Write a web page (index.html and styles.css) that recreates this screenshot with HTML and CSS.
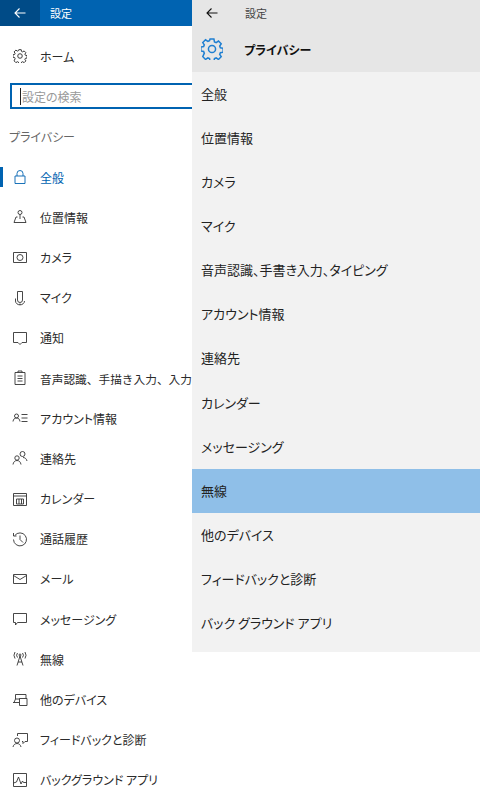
FILE: index.html
```html
<!DOCTYPE html>
<html lang="ja">
<head>
<meta charset="utf-8">
<title>設定</title>
<link rel="stylesheet" href="styles.css">
</head>
<body>
<div class="screen">
  <aside class="nav">
    <header class="nav-bar">
      <span class="nav-back"><svg class="arrow" viewBox="0 0 12 12"><path d="M11.500 6H1M5.500 1.500 1 6l4.500 4.500"/></svg></span>
      <span class="nav-title">設定</span>
    </header>
    <div class="home"><svg class="ico gear-small" viewBox="0 0 16 16"><use href="#gear"/></svg><span>ホーム</span></div>
    <div class="search"><span class="caret"></span><span>設定の検索</span></div>
    <div class="section">プライバシー</div>
    <ul class="nav-list">
      <li class="active"><svg class="ico" viewBox="0 0 16 16"><path d="M3 7h10v7.500H3zM5 7V4.500a3 3 0 0 1 6 0V7"/></svg><span>全般</span></li>
      <li><svg class="ico" viewBox="0 0 16 16"><circle cx="8" cy="3.500" r="2"/><path d="M8 5.500V10M5.500 8H4L2 13.500h12L12 8h-1.500"/></svg><span>位置情報</span></li>
      <li><svg class="ico" viewBox="0 0 16 16"><path d="M1.500 3.500h13v10h-13z"/><circle cx="8" cy="8.500" r="3"/></svg><span>カメラ</span></li>
      <li><svg class="ico" viewBox="0 0 16 16"><path d="M5.500 1.500h5V10a2.500 2.500 0 0 1-5 0zM3.500 8.500V11a3.500 3 0 0 0 9 0M8 13.500V15"/></svg><span>マイク</span></li>
      <li><svg class="ico" viewBox="0 0 16 16"><path d="M1.500 2.500h13v10H10l-2 2-2-2H1.500z"/></svg><span>通知</span></li>
      <li><svg class="ico" viewBox="0 0 16 16"><path d="M3 2.500h10v12H3zM6 2.500V1h4v1.500M5.500 6h5M5.500 8.500h5M5.500 11h5"/></svg><span class="long">音声認識、手描き入力、入力と表示</span></li>
      <li><svg class="ico" viewBox="0 0 16 16"><circle cx="4.500" cy="6" r="2"/><path d="M1 11.500c.3-2.500 1.700-3.500 3.500-3.500S7.700 9 8 11.500M9.500 4.500h6M9.500 8h6M9.500 11.500h6"/></svg><span>アカウント情報</span></li>
      <li><svg class="ico" viewBox="0 0 16 16"><circle cx="5" cy="8" r="2.200"/><path d="M1 14.500c.3-2.500 2-4 4-4s3.700 1.500 4 4"/><circle cx="10.500" cy="4" r="2.500"/><path d="M11 7.500c2 0 3.500 1.300 4 3.500"/></svg><span>連絡先</span></li>
      <li><svg class="ico" viewBox="0 0 16 16"><path d="M1.500 2.500h13v12h-13zM1.500 5h13M4.500 8h7M4.500 13h7M4.500 8v5M7 8v5M9.500 8v5M11.500 8v5"/></svg><span>カレンダー</span></li>
      <li><svg class="ico" viewBox="0 0 16 16"><path d="M2.800 4.500A6.500 6.500 0 1 1 1.500 8.500M1.500 2v3h3M8 4.500V8.500l3 3"/></svg><span>通話履歴</span></li>
      <li><svg class="ico" viewBox="0 0 16 16"><path d="M1.500 3.500h13v9h-13zM1.500 4.500 8 8.500l6.500-4"/></svg><span>メール</span></li>
      <li><svg class="ico" viewBox="0 0 16 16"><path d="M1.500 2.500h13v9H5.500l-2 2.500v-2.500h-2z"/></svg><span>メッセージング</span></li>
      <li><svg class="ico" viewBox="0 0 16 16"><circle cx="8" cy="4" r="1"/><path d="M8 5 5 14.500M8 5l3 9.500M6 11h4M5.500 2a3.500 3.500 0 0 0 0 4.500M10.500 2a3.500 3.500 0 0 1 0 4.500M3 1a6 6 0 0 0 0 6.500M13 1a6 6 0 0 1 0 6.500"/></svg><span>無線</span></li>
      <li><svg class="ico" viewBox="0 0 16 16"><path d="M3.500 7V2.500h10.500V6M1 10.500h6M2 10.500 3.500 7H8M7.500 6.500h7.500v7H7.500z"/></svg><span>他のデバイス</span></li>
      <li><svg class="ico" viewBox="0 0 16 16"><path d="M5.500 4V1.500h10v8H13l-2 2v-2H10"/><circle cx="5" cy="8.500" r="2.500"/><path d="M1 15c.3-2 2-3.500 4-3.500S8.700 13 9 15"/></svg><span>フィードバックと診断</span></li>
      <li><svg class="ico" viewBox="0 0 16 16"><path d="M1.500 1.500h13v13h-13zM1.500 11l3-1 2-5 2.500 7 1.500-3 1 1.500h3"/></svg><span>バックグラウンド アプリ</span></li>
    </ul>
  </aside>
  <section class="panel">
    <header class="panel-head">
      <div class="panel-top"><svg class="arrow dark" viewBox="0 0 12 12"><path d="M11.500 6H1M5.500 1.500 1 6l4.500 4.500"/></svg><span>設定</span></div>
      <div class="panel-title"><svg class="gear-big" viewBox="0 0 16 16"><use href="#gear"/></svg><h1>プライバシー</h1></div>
    </header>
    <ul class="panel-list">
      <li>全般</li>
      <li>位置情報</li>
      <li>カメラ</li>
      <li>マイク</li>
      <li>音声認識、手書き入力、タイピング</li>
      <li>アカウント情報</li>
      <li>連絡先</li>
      <li>カレンダー</li>
      <li>メッセージング</li>
      <li class="selected">無線</li>
      <li>他のデバイス</li>
      <li>フィードバックと診断</li>
      <li>バック グラウンド アプリ</li>
    </ul>
  </section>
</div>
<svg class="defs" width="0" height="0"><defs><g id="gear"><circle cx="8" cy="8" r="2.600"/><path d="M6.600 .8h2.800l.4 2 1.200.5 1.700-1.100 2 2-1.100 1.700.5 1.200 2 .4v2.800l-2 .4-.5 1.200 1.100 1.700-2 2-1.700-1.100-1.200.5-.4 2H6.600l-.4-2-1.200-.5-1.700 1.100-2-2L2.400 11l-.5-1.200-2-.4V6.600l2-.4.5-1.200-1.100-1.700 2-2L5 2.400l1.200-.5z"/></g></defs></svg>
</body>
</html>
```
FILE: styles.css
```css
* { box-sizing: border-box; }
html, body { margin: 0; padding: 0; }
body {
  width: 480px;
  height: 808px;
  overflow: hidden;
  background: #fff;
  font-family: "Noto Sans CJK JP", "Noto Sans", sans-serif;
  font-feature-settings: "palt";
  color: #2b2b2b;
}
ul { list-style: none; margin: 0; padding: 0; }
h1 { margin: 0; font: inherit; }
.defs { position: absolute; }
.screen { position: relative; width: 480px; height: 808px; overflow: hidden; }

.nav { width: 192px; height: 808px; overflow: hidden; }
.nav-bar { display: flex; align-items: center; height: 26px; background: #0063b1; color: #fff; font-size: 11px; }
.nav-back { display: flex; align-items: center; justify-content: center; width: 40px; height: 26px; background: #004b87; }
.nav-title { margin-left: 10px; }
.arrow { width: 12px; height: 12px; fill: none; stroke: #fff; stroke-width: 1.100; }
.arrow.dark { stroke: #111; }
.ico { flex: none; width: 16px; height: 16px; margin-right: 12px; fill: none; stroke: #333; stroke-width: .9; }
.gear-small { width: 14px; height: 14px; margin-left: 1px; margin-right: 13px; stroke-width: 1.100; }
.home { display: flex; align-items: center; height: 22px; margin-top: 19px; padding-left: 12px; font-size: 12px; }
.search { display: flex; align-items: center; width: 190px; height: 26px; margin: 16px 0 0 10px; padding-left: 9px; border: 2px solid #0063b1; border-right: 0; font-size: 12px; color: #999; }
.caret { width: 1px; height: 17px; background: #222; margin-right: 1px; margin-left: -1px; }
.section { margin-top: 18px; height: 20px; line-height: 20px; padding-left: 9px; font-size: 12px; color: #666; }
.nav-list { margin-top: 10px; }
.nav-list li { display: flex; align-items: center; height: 40.200px; padding-left: 12px; font-size: 12px; white-space: nowrap; position: relative; }
.nav-list li .long { font-feature-settings: normal; font-size: 11.700px; }
.nav-list li.active { color: #0063b1; }
.nav-list li.active .ico { stroke: #0063b1; }
.nav-list li.active::before { content: ""; position: absolute; left: 0; top: 10px; width: 3px; height: 20px; background: #0063b1; }

.panel { position: absolute; left: 192px; top: 0; width: 288px; height: 652px; background: #f2f2f2; }
.panel-head { height: 72px; background: #e6e6e6; }
.panel-top { display: flex; align-items: center; height: 26px; padding-left: 14px; font-size: 11px; color: #444; }
.panel-top .arrow { margin-right: 27px; }
.panel-title { display: flex; align-items: center; height: 46px; padding-left: 9px; font-size: 12px; font-weight: 700; color: #111; }
.gear-big { width: 22px; height: 22px; margin-right: 21px; fill: none; stroke: #1f7fd1; stroke-width: 1.100; }
.panel-list li { display: flex; align-items: center; height: 44.150px; padding-left: 9px; padding-bottom: 2px; font-size: 13px; color: #222; white-space: nowrap; }
.panel-list li.selected { background: #8fbfe8; }
```
